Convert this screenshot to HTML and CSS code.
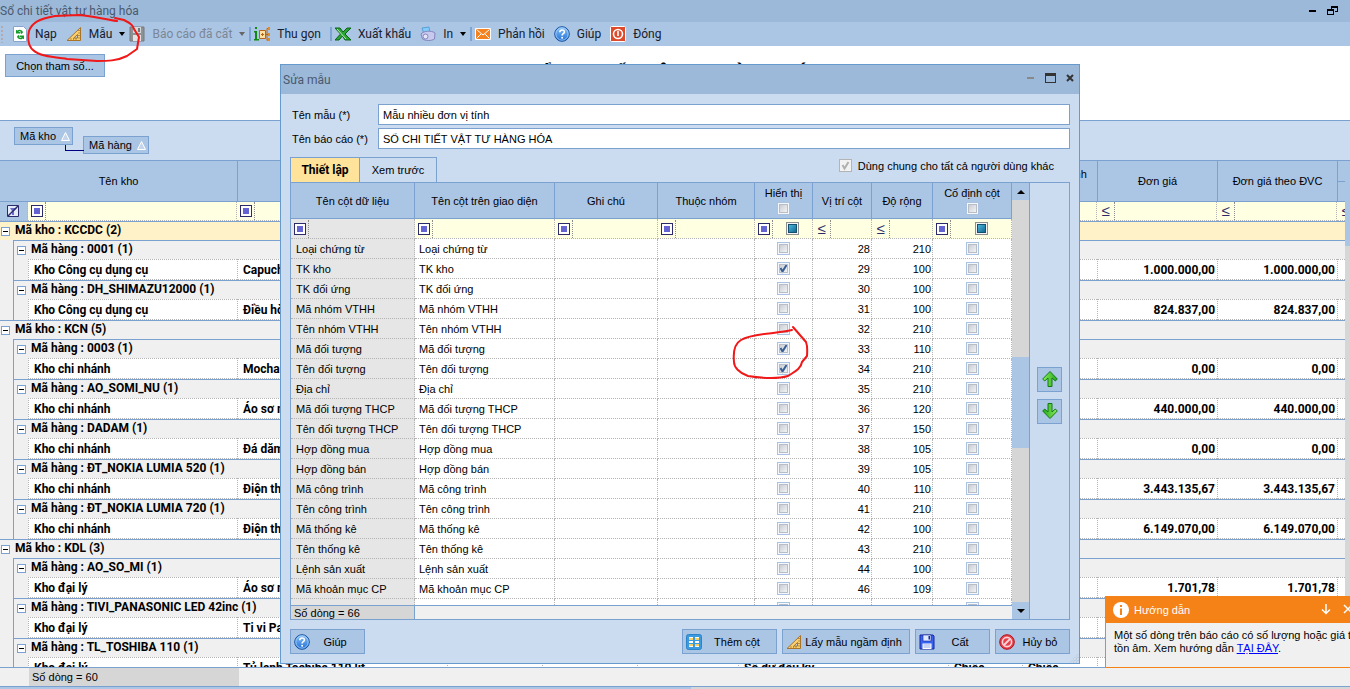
FILE: index.html
```html
<!DOCTYPE html>
<html lang="vi">
<head>
    <meta charset="UTF-8">
    <meta name="viewport" content="width=device-width, initial-scale=1.0">
    <title>Sổ chi tiết vật tư hàng hóa</title>
    <link rel="stylesheet" href="styles.css">
</head>
<body>
    <svg class="defs" width="0" height="0">
        <defs>
            <linearGradient id="blue" x1="0" y1="0" x2="0" y2="1"><stop offset="0" stop-color="#8cc4f8"/><stop offset="1" stop-color="#1f6fd6"/></linearGradient>
            <linearGradient id="green" x1="0" y1="0" x2="1" y2="0"><stop offset="0" stop-color="#8df05a"/><stop offset="1" stop-color="#22a51c"/></linearGradient>
            <symbol id="i-help" viewBox="0 0 16 16"><circle cx="8" cy="8" r="7.300" fill="url(#blue)" stroke="#14509e"/><circle cx="8" cy="8" r="6.200" fill="none" stroke="#b9dcff" stroke-width=".7"/><path d="M5.800 6.300c0-3.200 4.600-3 4.600-.3 0 1.700-2.300 1.600-2.300 3.400" fill="none" stroke="#fff" stroke-width="1.600"/><circle cx="8.100" cy="11.700" r="1" fill="#fff"/></symbol>
            <symbol id="i-ruler" viewBox="0 0 16 16"><path d="M14.500 1.500v13H1z" fill="#f9cf6e" stroke="#a8742a"/><path d="M11.500 8.500v3.500H7.800z" fill="#c6d8ee" stroke="#a8742a"/><path d="M13 4v1M13 6.500v1M13 9v1M13 11.500v1M5 13.500v-1M7.500 13.500v-1M10 13.500v-1" stroke="#7a4d12"/></symbol>
            <symbol id="i-save" viewBox="0 0 16 16"><path d="M1 1h13l1 1v13H1z" fill="#3a63f0" stroke="#16269c"/><path d="M4 1h8v6H4z" fill="#dfeaff" stroke="#16269c" stroke-width=".6"/><path d="M9.500 2h1.500v3.500H9.500z" fill="#16269c"/><path d="M3.500 9.500h9V15h-9z" fill="#fff"/><path d="M4.500 11h7M4.500 13h7" stroke="#8fa6e8"/></symbol>
            <symbol id="i-arrow" viewBox="0 0 16 16"><path d="M8 .5L15.300 8l-2 2L10 7v8.500H6V7l-3.300 3-2-2z" fill="url(#green)" stroke="#127812"/></symbol>
        </defs>
    </svg>

    <header class="titlebar">
        <span>Sổ chi tiết vật tư hàng hóa</span>
        <span class="winbtns">
            <button aria-label="Thu nhỏ"><svg width="8" height="12"><path d="M0 5h7v2H0z"/></svg></button>
            <button aria-label="Khôi phục"><svg width="12" height="12"><path d="M4 1h7v6H8V6h2V3H5v1H4zM0 4h7v6H0zM1 6v3h5V6z" fill-rule="evenodd"/></svg></button>
        </span>
    </header>

    <nav class="toolbar">
        <span class="grip"></span>
        <button><svg class="icon" viewBox="0 0 16 16"><path d="M1.500.5h10l3 3v12h-13z" fill="#fff" stroke="#8aa3cc"/><path d="M4 5.500V3.800l1.200.8C7 3 10.500 3.500 11 6.500L9.500 8 8 6.800l1-.8C8.500 5 7 5 6.300 6H8v1.500H4zM12 10.500v2.800l-1.300-.9C9 14 5.500 13.500 5 10.500L6.500 9 8 10.200l-1 .8c.5 1 2 1 2.700 0H8V9.500h4z" fill="#159a2e"/></svg>Nạp</button>
        <button class="drop"><svg class="icon"><use href="#i-ruler"/></svg>Mẫu<i class="caret"></i></button>
        <button class="drop off" disabled><svg class="icon" viewBox="0 0 16 16"><path d="M1 1h14v14H1z" fill="#8f9295" stroke="#77797c"/><path d="M4 1h8v6H4z" fill="#d5d7d9"/><path d="M9 2h2v4H9z" fill="#777"/><path d="M4 9h8v6H4z" fill="#e3e3e3"/></svg>Báo cáo đã cất<i class="caret"></i></button>
        <span class="sep"></span>
        <button><svg class="icon" viewBox="0 0 16 16"><path d="M0 5h3v8h2v1.500H0V13h1V6.500H0zM1 1h2v2H1z" fill="#128a12"/><path d="M5.500 4.500h6v8h-6z" fill="#ffe0a0" stroke="#b5651d"/><path d="M7 8.500h3M8.500 7v3M11.500 8.500h4M13 2.500v12M13 2.500h2M13 14h2" stroke="#b5651d"/><path d="M14 1h2v3h-2zM14 7h2v3h-2zM14 12h2v3h-2z" fill="#e08a2a"/></svg>Thu gọn</button>
        <span class="sep"></span>
        <button><svg class="icon" viewBox="0 0 16 16"><path d="M0 2h5l3 4 4-4h4l-6 6 6 6h-6L7.500 10 4 14H0l5.500-6z" fill="#2ba336" stroke="#0a6418"/><path d="M2 3l9 10" stroke="#b8f0a8"/></svg>Xuất khẩu</button>
        <button class="drop"><svg class="icon" viewBox="0 0 16 16"><path d="M2 2l7-1 1 6-6 1z" fill="#83cdf8" stroke="#5b9fd8"/><path d="M1 8c2-3 10-4 14-1l-.5 6c-3 2-9 2-12 0z" fill="#c9c9ee" stroke="#8286bd"/><circle cx="5.500" cy="10.500" r="2.500" fill="#e4e4fa" stroke="#8286bd"/></svg>In<i class="caret"></i></button>
        <span class="sep"></span>
        <button><svg class="icon" viewBox="0 0 16 16"><path d="M.5 2.500h15v11H.5z" fill="#f58220" stroke="#fff"/><path d="M1.500 3.500L8 9l6.500-5.500M1.500 12.500L6 8M14.500 12.500L10 8" fill="none" stroke="#fff"/></svg>Phản hồi</button>
        <button><svg class="icon"><use href="#i-help"/></svg>Giúp</button>
        <button><svg class="icon" viewBox="0 0 16 16"><rect x=".5" y=".5" width="15" height="15" rx="1" fill="#dd4a2c" stroke="#fff"/><circle cx="8" cy="8" r="4.500" fill="none" stroke="#fff" stroke-width="1.600"/><path d="M8 5v5" stroke="#fff" stroke-width="1.600"/></svg>Đóng</button>
    </nav>

    <section class="params">
        <button class="btn">Chọn tham số...</button>
        <h1>SỔ CHI TIẾT VẬT TƯ HÀNG HÓA</h1>
    </section>

    <section class="groupby">
        <button class="chip">Mã kho <svg width="9" height="9"><path d="M.5 8.500L4.500.5l4 8z" fill="#c5d6ec" stroke="#fff"/></svg></button>
        <button class="chip child">Mã hàng <svg width="9" height="9"><path d="M.5 8.500L4.500.5l4 8z" fill="#c5d6ec" stroke="#fff"/></svg></button>
    </section>

    <main class="report">
        <div class="report-body">
            <table class="stock">
                <colgroup>
                    <col class="c13"><col class="c15"><col class="c209"><col class="c210"><col class="c95"><col class="c95"><col class="c101"><col class="c210"><col class="c74"><col class="c75"><col class="c120"><col class="c120"><col class="c120">
                </colgroup>
                <thead>
                    <tr>
                        <th colspan="3">Tên kho</th><th></th><th></th><th></th><th></th><th></th><th></th><th>Đơn vị tính chính</th><th>Đơn giá</th><th>Đơn giá theo ĐVC</th><th class="split"></th>
                    </tr>
                    <tr class="filter" id="stock-filter"></tr>
                </thead>
                <tbody id="stock-rows"></tbody>
            </table>
        </div>
        <div class="vscroll"></div>
    </main>
    <footer class="summary"><span>Số dòng = 60</span></footer>
    <div class="hscroll"></div>

    <div class="dialog" role="dialog" aria-labelledby="dlg-title">
        <div class="dialog-title">
            <span id="dlg-title">Sửa mẫu</span>
            <span class="winbtns">
                <button aria-label="Thu nhỏ"><svg width="8" height="12"><path d="M0 5h7v2H0z" fill="#888"/></svg></button>
                <button aria-label="Phóng to"><svg width="11" height="12"><path d="M0 1h11v10H0zM1 4v6h9V4z" fill="#333" fill-rule="evenodd"/></svg></button>
                <button aria-label="Đóng"><svg width="8" height="12"><path d="M1 3l6 6M7 3L1 9" stroke="#333" stroke-width="2"/></svg></button>
            </span>
        </div>
        <form class="dialog-body">
            <div class="field"><label for="tpl-name">Tên mẫu (*)</label><input type="text" id="tpl-name" value="Mẫu nhiều đơn vị tính"></div>
            <div class="field"><label for="rpt-name">Tên báo cáo (*)</label><input type="text" id="rpt-name" value="SỔ CHI TIẾT VẬT TƯ HÀNG HÓA"></div>
            <div class="tabs">
                <button type="button" class="tab active">Thiết lập</button>
                <button type="button" class="tab">Xem trước</button>
                <label class="share"><input type="checkbox" checked disabled> Dùng chung cho tất cả người dùng khác</label>
            </div>
            <div class="frame">
                <div class="columns-pane">
                    <div class="columns-scroll">
                        <table class="columns">
                            <colgroup>
                                <col class="c124"><col class="c140"><col><col class="c97"><col class="c58"><col class="c59"><col class="c61"><col class="c79">
                            </colgroup>
                            <thead>
                                <tr>
                                    <th>Tên cột dữ liệu</th><th>Tên cột trên giao diện</th><th>Ghi chú</th><th>Thuộc nhóm</th>
                                    <th><label>Hiển thị<input type="checkbox"></label></th>
                                    <th>Vị trí cột</th><th>Độ rộng</th>
                                    <th><label>Cố định cột<input type="checkbox"></label></th>
                                </tr>
                                <tr class="filter" id="column-filter"></tr>
                            </thead>
                            <tbody id="column-rows"></tbody>
                        </table>
                    </div>
                    <div class="columns-total"><span>Số dòng = 66</span></div>
                </div>
                <div class="scrollbar">
                    <button type="button" aria-label="Lên"><svg width="8" height="4"><path d="M4 0l4 4H0z"/></svg></button>
                    <div class="track"><div class="thumb"></div></div>
                    <button type="button" aria-label="Xuống"><svg width="8" height="4"><path d="M4 4l4-4H0z"/></svg></button>
                </div>
                <div class="movers">
                    <button type="button" class="btn" aria-label="Chuyển lên"><svg class="icon"><use href="#i-arrow"/></svg></button>
                    <button type="button" class="btn" aria-label="Chuyển xuống"><svg class="icon flip"><use href="#i-arrow"/></svg></button>
                </div>
            </div>
            <div class="actions">
                <button type="button" class="btn w75"><svg class="icon"><use href="#i-help"/></svg><span>Giúp</span></button>
                <button type="button" class="btn w95 push"><svg class="icon" viewBox="0 0 16 16"><rect x=".5" y=".5" width="15" height="15" rx="2" fill="#3b9be0" stroke="#2c83c6"/><path d="M3 3h4v10H3zM9 3h4v10H9z" fill="#fff"/><path d="M3 4h4v2H3zM9 4h4v2H9zM3 10h4v2H3zM9 10h4v2H9z" fill="#f5cf62"/><path d="M3 6.500h10M3 9.500h10" stroke="#3b9be0"/></svg><span>Thêm cột</span></button>
                <button type="button" class="btn w128"><svg class="icon"><use href="#i-ruler"/></svg><span>Lấy mẫu ngầm định</span></button>
                <button type="button" class="btn w75"><svg class="icon"><use href="#i-save"/></svg><span>Cất</span></button>
                <button type="button" class="btn w75"><svg class="icon" viewBox="0 0 16 16"><circle cx="8" cy="8" r="7.300" fill="#e8404a" stroke="#b0141e"/><circle cx="8" cy="8" r="4.600" fill="#e8404a" stroke="#fbd5d7" stroke-width="1.600"/><path d="M5 11l6-6" stroke="#fbd5d7" stroke-width="1.800"/></svg><span>Hủy bỏ</span></button>
            </div>
        </form>
        <svg class="sizer" width="9" height="9"><path d="M7 1h2v2H7zM4 4h2v2H4zM7 4h2v2H7zM1 7h2v2H1zM4 7h2v2H4zM7 7h2v2H7z" fill="#f3f6fb" stroke="#9fb4d2" stroke-width=".5"/></svg>
    </div>

    <aside class="toast">
        <div class="toast-head">
            <svg class="icon" viewBox="0 0 16 16"><circle cx="8" cy="8" r="8" fill="#fff"/><path d="M7 3h2v2H7zM7 6.500h2V13H7z" fill="#f58216"/></svg>
            <strong>Hướng dẫn</strong>
            <button aria-label="Ẩn"><svg width="10" height="12"><path d="M5 1v9M1 6.500l4 4 4-4" fill="none" stroke="#fff" stroke-width="1.500"/></svg></button>
            <button aria-label="Đóng"><svg width="10" height="12"><path d="M1 2l8 8M9 2l-8 8" stroke="#fff" stroke-width="1.500"/></svg></button>
        </div>
        <p>Một số dòng trên báo cáo có số lượng hoặc giá trị<br>tồn âm. Xem hướng dẫn <a href="#">TẠI ĐÂY</a>.</p>
    </aside>

    <svg class="marks" width="820" height="400" fill="none" stroke="#f01818" stroke-width="2" stroke-linecap="round" stroke-linejoin="round">
        <path d="M115 18l9 2c8 4 9 6 10 9l5 8-2 12-10 7c-10 5-20 5-30 5l-30-2c-15-2-28-3-34-9-6-5-5-15-4-19 3-8 9-12 26-15l24-1c15 1 24 4 38 6"/>
        <path d="M793 327l13 15c2 5 1 12 1 14l-5 6c-1 7-8 10-14 14-10 3-27 2-40 0-9-3-14-9-14-14-1-10 0-18 7-22 12-7 35-6 51-10"/>
    </svg>

    <script>
        const opBox = '<button type="button" class="op" aria-label="Điều kiện lọc"><i></i></button>';
        const opLess = '<button type="button" class="op less">≤</button>';

        function filterCell(type) {
            const value = type === 'check'
                ? '<input type="checkbox" class="mixed" aria-label="Lọc">'
                : '<input type="text" aria-label="Lọc">';
            return `<td><div class="fcell">${type === 'less' ? opLess : opBox}${value}</div></td>`;
        }

        // report grid
        const stock = [
            ['KCCDC', 'Kho Công cụ dụng cụ', [
                ['0001', 'Capuchino', '1.000.000,00'],
                ['DH_SHIMAZU12000', 'Điều hòa Shimazu', '824.837,00']
            ]],
            ['KCN', 'Kho chi nhánh', [
                ['0003', 'Mochachino', '0,00'],
                ['AO_SOMI_NU', 'Áo sơ mi', '440.000,00'],
                ['DADAM', 'Đá dăm', '0,00'],
                ['ĐT_NOKIA LUMIA 520', 'Điện thoại', '3.443.135,67'],
                ['ĐT_NOKIA LUMIA 720', 'Điện thoại', '6.149.070,00']
            ]],
            ['KDL', 'Kho đại lý', [
                ['AO_SO_MI', 'Áo sơ mi', '1.701,78'],
                ['TIVI_PANASONIC LED 42inc', 'Ti vi Panasonic', ''],
                ['TL_TOSHIBA 110', 'Tủ lạnh Toshiba 110 lít', '', 'Số dư đầu kỳ', 'Chiếc']
            ]]
        ];

        document.getElementById('stock-filter').innerHTML =
            '<td colspan="2" class="clear"><button type="button" aria-label="Bỏ lọc"><svg width="12" height="12"><path d="M.5.5h11v11H.5z" fill="#e4eaf8" stroke="#2b2b6b"/><path d="M3 3h7L7 6v4H5V6z" fill="#6b6bd0"/><path d="M1 11L11 1" stroke="#2b2b6b" stroke-width="1.500"/></svg></button></td>' +
            ['text', 'text', 'less', 'less', 'less', 'text', 'text', 'text', 'less', 'less', 'less'].map(filterCell).join('');

        document.getElementById('stock-rows').innerHTML = stock.map(([code, place, items], i) =>
            `<tr class="lvl1 ${i === 0 ? 'current' : ''}"><td colspan="13"><button class="toggle" aria-label="Thu gọn"></button>Mã kho : ${code} (${items.length})</td></tr>` +
            items.map(([item, name, price, note = '', unit = '']) =>
                `<tr class="lvl2"><td class="indent"></td><td colspan="12"><button class="toggle" aria-label="Thu gọn"></button>Mã hàng : ${item} (1)</td></tr>
                <tr class="item"><td class="indent"></td><td class="indent2"></td><td>${place}</td><td>${name}</td><td></td><td></td><td></td><td>${note}</td><td>${unit}</td><td>${unit}</td><td class="num">${price}</td><td class="num">${price}</td><td></td></tr>`
            ).join('')
        ).join('');

        // columns of the template: name, position, width, visible
        const columns = [
            ['Loại chứng từ', 28, 210], ['TK kho', 29, 100, true], ['TK đối ứng', 30, 100],
            ['Mã nhóm VTHH', 31, 100], ['Tên nhóm VTHH', 32, 210], ['Mã đối tượng', 33, 110, true],
            ['Tên đối tượng', 34, 210, true], ['Địa chỉ', 35, 210], ['Mã đối tượng THCP', 36, 120],
            ['Tên đối tượng THCP', 37, 150], ['Hợp đồng mua', 38, 105], ['Hợp đồng bán', 39, 105],
            ['Mã công trình', 40, 110], ['Tên công trình', 41, 210], ['Mã thống kê', 42, 100],
            ['Tên thống kê', 43, 210], ['Lệnh sản xuất', 44, 100], ['Mã khoản mục CP', 46, 109],
            ['', '', '']
        ];

        document.getElementById('column-filter').innerHTML =
            ['text', 'text', 'text', 'text', 'check', 'less', 'less', 'check'].map(filterCell).join('');

        document.getElementById('column-rows').innerHTML = columns.map(([name, pos, width, shown]) =>
            `<tr><td>${name}</td><td>${name}</td><td></td><td></td>
            <td class="tick"><input type="checkbox" aria-label="Hiển thị ${name}" ${shown ? 'checked' : ''}></td>
            <td class="num">${pos}</td><td class="num">${width}</td>
            <td class="tick"><input type="checkbox" aria-label="Cố định ${name}"></td></tr>`
        ).join('');
    </script>
</body>
</html>
```
FILE: styles.css
```css
* {
    box-sizing: border-box;
}
body {
    margin: 0;
    height: 100vh;
    display: flex;
    flex-direction: column;
    position: relative;
    overflow: hidden;
    background: #fff;
    font-family: "Liberation Sans", Arial, sans-serif;
    font-size: 11px;
    line-height: 14px;
    color: #000;
}
button, input {
    font: inherit;
    color: inherit;
    margin: 0;
}
button {
    padding: 0;
    border: 0;
    background: none;
    white-space: nowrap;
}
.defs {
    position: absolute;
}
.icon {
    width: 16px;
    height: 16px;
    flex: none;
}

/* window frame */
.titlebar, .toolbar, .dialog-title {
    font-family: Roboto, "Noto Sans", sans-serif;
    font-size: 12px;
}
.titlebar {
    display: flex;
    justify-content: space-between;
    align-items: center;
    height: 22px;
    flex: none;
    padding-right: 11px;
    background: #9cb9d9;
    color: #4a5a6e;
}
.winbtns {
    display: flex;
    gap: 10px;
}
.winbtns svg {
    display: block;
}
.toolbar {
    display: flex;
    align-items: center;
    height: 24px;
    flex: none;
    background: #abc5e5;
    color: #16202e;
}
.toolbar button {
    display: flex;
    align-items: center;
    gap: 7px;
    padding-right: 9px;
}
.toolbar .drop {
    padding-right: 4px;
}
.toolbar .off {
    color: #7c8795;
}
.grip {
    width: 4px;
    height: 18px;
    margin-right: 8px;
    background: radial-gradient(circle, #b5a9a9 1px, transparent 1px) 0 0 / 4px 4px;
}
.caret {
    border: 3px solid transparent;
    border-top: 4px solid #000;
    border-bottom: 0;
}
.off .caret {
    border-top-color: #666;
}
.sep {
    width: 2px;
    height: 14px;
    margin-right: 3px;
    background: #7da4d4;
}
.btn {
    border: 1px solid #7ba1d0;
    background: #abc5e5;
}

/* parameters and group-by panel */
.params {
    height: 74px;
    flex: none;
    padding: 8px 5px;
}
.params .btn {
    width: 100px;
    height: 23px;
    display: block;
}
.params h1 {
    margin: -18px 0 0;
    text-align: center;
    font-size: 19px;
    line-height: 28px;
}
.groupby {
    display: flex;
    gap: 10px;
    height: 40px;
    flex: none;
    padding: 6px 14px;
    border-top: 1px solid #7ba1d0;
    background: #cbdbf0;
}
.chip {
    display: flex;
    align-items: center;
    gap: 5px;
    height: 18px;
    padding: 0 2px 0 5px;
    border: 1px solid #7ba1d0;
    background: #abc5e5;
    position: relative;
}
.child {
    margin-top: 9px;
}
.child::before {
    content: "";
    position: absolute;
    left: -19px;
    top: 8px;
    width: 18px;
    height: 5px;
    border-left: 1px solid #000080;
    border-bottom: 1px solid #000080;
}

/* report grid */
.report {
    flex: 1;
    min-height: 0;
    display: flex;
    border-top: 1px solid #7ba1d0;
    background: #f0f0f0;
}
.report-body {
    flex: 1;
    min-width: 0;
    overflow: hidden;
}
.vscroll {
    width: 5px;
    background: linear-gradient(#abc5e5 85px, #d6d6d6 85px);
}
table {
    table-layout: fixed;
    border-collapse: separate;
    border-spacing: 0;
}
th, td {
    padding: 0;
}
th {
    font-weight: normal;
    background: #abc5e5;
    border-right: 1px solid #7ba1d0;
    border-bottom: 1px solid #7ba1d0;
}
.stock {
    width: 1457px;
}
.stock th {
    height: 41px;
    padding: 0 8px;
    border-right: 0;
    border-left: 1px solid #7ba1d0;
}
.stock th:first-child {
    border-left: 0;
}
.stock .split {
    background: linear-gradient(#abc5e5 20px, #7ba1d0 20px, #7ba1d0 21px, #abc5e5 21px);
}
.stock tbody {
    font-family: Roboto, "Noto Sans", sans-serif;
    font-size: 12px;
    font-weight: bold;
}
.c13 { width: 13px; }
.c15 { width: 15px; }
.c58 { width: 58px; }
.c59 { width: 59px; }
.c61 { width: 61px; }
.c74 { width: 74px; }
.c75 { width: 75px; }
.c79 { width: 79px; }
.c95 { width: 95px; }
.c97 { width: 97px; }
.c101 { width: 101px; }
.c120 { width: 120px; }
.c124 { width: 124px; }
.c140 { width: 140px; }
.c209 { width: 209px; }
.c210 { width: 210px; }

.filter td {
    background: #ffffe1;
    border-right: 1px dotted #b4b4b4;
    border-bottom: 1px dotted #b4b4b4;
}
.stock .filter td {
    height: 19px;
}
.filter .clear {
    background: #abc5e5;
}
.clear svg {
    display: block;
}
.clear button {
    margin-left: 7px;
    display: block;
}
.fcell {
    display: flex;
    height: 18px;
    align-items: center;
}
.fcell input[type=text] {
    flex: 1;
    min-width: 0;
    width: 0;
    height: 18px;
    padding: 0 2px;
    border: 0;
    background: none;
}
.op {
    flex: none;
    display: flex;
    align-items: center;
    justify-content: center;
    width: 18px;
    height: 18px;
    border-right: 1px dotted #8c8c8c;
}
.op i {
    width: 12px;
    height: 12px;
    border: 1px solid #2b2b6b;
    background: linear-gradient(#6464d2, #6464d2) center / 6px 6px no-repeat #fff;
}
.less {
    font-size: 15px;
    color: #2b2b6b;
}
.lvl1 td, .lvl2 td {
    height: 19px;
    padding-bottom: 2px;
    border-top: 1px solid #7ba1d0;
}
.current td {
    background: #fff1c8;
}
.lvl2 td:last-child, .stock .indent2 {
    border-left: 1px solid #7ba1d0;
}
.stock .indent, .stock .indent2 {
    border-top: 0;
    border-bottom: 0;
    background: #f0f0f0;
}
.item td {
    height: 21px;
    padding: 0 0 0 5px;
    border-left: 1px dotted #b4b4b4;
    border-top: 1px dotted #b4b4b4;
    border-bottom: 1px dotted #b4b4b4;
    background: #fff;
    white-space: nowrap;
    overflow: hidden;
}
.item .indent {
    border-left: 0;
}
.item .num {
    text-align: right;
    padding-right: 2px;
}
.toggle {
    display: inline-block;
    vertical-align: -1px;
    width: 9px;
    height: 9px;
    margin: 0 5px 0 1px;
    border: 1px solid #7ba1d0;
    background: linear-gradient(#000, #000) center / 5px 1px no-repeat #fff;
}
.lvl2 .toggle {
    margin-left: 3px;
}
.summary {
    display: flex;
    height: 20px;
    flex: none;
    padding-left: 29px;
    border-top: 1px solid #7ba1d0;
    border-bottom: 1px solid #7ba1d0;
    background: #f0f0f0;
}
.summary span {
    width: 210px;
    padding: 2px 3px;
    background: #d6d6d6;
}
.hscroll {
    height: 2px;
    flex: none;
    background: linear-gradient(90deg, #abc5e5 691px, #d6d6d6 691px);
}

/* template editor */
.dialog {
    position: absolute;
    left: 280px;
    top: 64px;
    bottom: 25px;
    width: 800px;
    display: flex;
    flex-direction: column;
    border: 1px solid #6699cc;
    background: #cbdbf0;
}
.dialog-title {
    display: flex;
    justify-content: space-between;
    align-items: center;
    height: 29px;
    flex: none;
    padding: 0 5px 0 2px;
    background: #9cb9d9;
    color: #4a5a6e;
}
.dialog-title .winbtns {
    margin-bottom: 4px;
}
.dialog-body {
    flex: 1;
    min-height: 0;
    display: flex;
    flex-direction: column;
    padding: 10px 9px 9px;
}
.field {
    display: flex;
    align-items: center;
    flex: none;
    margin-bottom: 3px;
}
.field label {
    width: 88px;
    padding-left: 2px;
}
.field input {
    flex: 1;
    height: 21px;
    padding: 0 4px;
    border: 1px solid #7ba1d0;
    background: #fff;
}
.tabs {
    display: flex;
    flex: none;
    height: 25px;
    margin-top: 5px;
}
.tab {
    width: 77px;
    border: 1px solid #7ba1d0;
    border-left: 0;
    border-bottom: 0;
}
.tab.active {
    width: 70px;
    border-left: 1px solid #7ba1d0;
    background: #ffe39b;
    font-family: Roboto, "Noto Sans", sans-serif;
    font-size: 12px;
    font-weight: bold;
}
.share {
    display: flex;
    align-items: center;
    gap: 6px;
    margin-left: auto;
    margin-right: 16px;
    padding-bottom: 8px;
}
.frame {
    flex: 1;
    min-height: 0;
    display: flex;
    border: 1px solid #7ba1d0;
}
.columns-pane {
    flex: 1;
    min-width: 0;
    display: flex;
    flex-direction: column;
}
.columns-scroll {
    flex: 1;
    min-height: 0;
    overflow: hidden;
    background: #fff;
}
.columns {
    width: 100%;
}
.columns th {
    height: 36px;
}
.columns th label {
    display: flex;
    flex-direction: column;
    align-items: center;
    gap: 2px;
}
.columns td {
    height: 20px;
    border-right: 1px dotted #b4b4b4;
    border-bottom: 1px dotted #b4b4b4;
    white-space: nowrap;
}
.columns tbody td {
    padding: 0 4px;
}
.columns tbody td:first-child {
    padding-left: 5px;
}
.columns tbody .num {
    padding: 0 1px;
    text-align: right;
}
.columns tbody .tick {
    padding: 0;
}
.columns td:first-child {
    background: #e6e6e6;
}
input[type=checkbox] {
    appearance: none;
    flex: none;
    display: block;
    width: 13px;
    height: 13px;
    border: 1px solid #abc3e3;
    padding: 1px;
    background: linear-gradient(135deg, #c3c8d0, #f8f8f8) content-box, #f4f7fc;
    outline: 1px solid #b9bec6;
    outline-offset: -3px;
}
.tick input[type=checkbox] {
    margin: 0 auto;
}
input[type=checkbox]:checked {
    background: url("data:image/svg+xml,%3Csvg xmlns='http://www.w3.org/2000/svg' viewBox='0 0 11 11'%3E%3Cpath d='M2.500 5l2 3.500L8.500 2' fill='none' stroke='%23395f96' stroke-width='2'/%3E%3C/svg%3E") center / 11px 11px no-repeat, linear-gradient(135deg, #c3c8d0, #f8f8f8) content-box, #f4f7fc;
}
input[type=checkbox]:disabled {
    border-color: #b4b4b4;
    outline: 0;
    background: url("data:image/svg+xml,%3Csvg xmlns='http://www.w3.org/2000/svg' viewBox='0 0 11 11'%3E%3Cpath d='M2.500 5l2 3.500L8.500 2' fill='none' stroke='%23b0b0b0' stroke-width='2'/%3E%3C/svg%3E") center / 11px 11px no-repeat, #f2f2f2;
}
input[type=checkbox].mixed {
    margin: 0 auto;
    border-color: #8e8f8f;
    outline-color: #14506e;
    background: linear-gradient(135deg, #52c3e8, #0d5c85) content-box, #f4f4f4;
}
.columns-total {
    display: flex;
    height: 14px;
    flex: none;
    border-top: 1px solid #7ba1d0;
    background: #f0f0f0;
}
.columns-total span {
    width: 124px;
    padding-left: 3px;
    border-right: 1px solid #7ba1d0;
    background: #d6d6d6;
}
.scrollbar {
    width: 18px;
    display: flex;
    flex-direction: column;
    border-right: 1px solid #7ba1d0;
    background: #d6d6d6;
}
.scrollbar button {
    display: flex;
    align-items: center;
    justify-content: center;
    height: 17px;
    background: #abc5e5;
}
.track {
    flex: 1;
}
.thumb {
    height: 91px;
    margin-top: 157px;
    background: #abc5e5;
}
.movers {
    width: 39px;
    display: flex;
    flex-direction: column;
    align-items: center;
    justify-content: center;
    gap: 7px;
    padding-bottom: 12px;
}
.movers .btn {
    width: 25px;
    height: 25px;
    display: flex;
    align-items: center;
    justify-content: center;
}
.flip {
    transform: rotate(180deg);
}
.actions {
    display: flex;
    gap: 5px;
    flex: none;
    margin-top: 9px;
}
.actions .btn {
    display: flex;
    align-items: center;
    height: 25px;
    padding: 0 4px 0 3px;
}
.actions span {
    flex: 1;
    text-align: center;
}
.push {
    margin-left: auto;
}
.w75 { width: 75px; }
.w95 { width: 95px; }
.w128 { width: 128px; }
.sizer {
    position: absolute;
    right: 0;
    bottom: 0;
}

/* notice in the corner */
.toast {
    position: absolute;
    left: 1105px;
    bottom: 21px;
    width: 260px;
    border: 1px solid #f58216;
    background: #f0f0f0;
}
.toast-head {
    display: flex;
    align-items: center;
    gap: 5px;
    height: 26px;
    padding-left: 7px;
    background: #f58216;
    color: #fff;
}
.toast-head strong {
    font-weight: normal;
    width: 182px;
}
.toast-head button {
    padding-right: 7px;
}
.toast p {
    margin: 0;
    padding: 6px 8px;
    height: 44px;
    line-height: 13px;
    white-space: nowrap;
}
.toast a {
    color: #0000ff;
}
.marks {
    position: absolute;
    left: 0;
    top: 0;
    pointer-events: none;
}
```
